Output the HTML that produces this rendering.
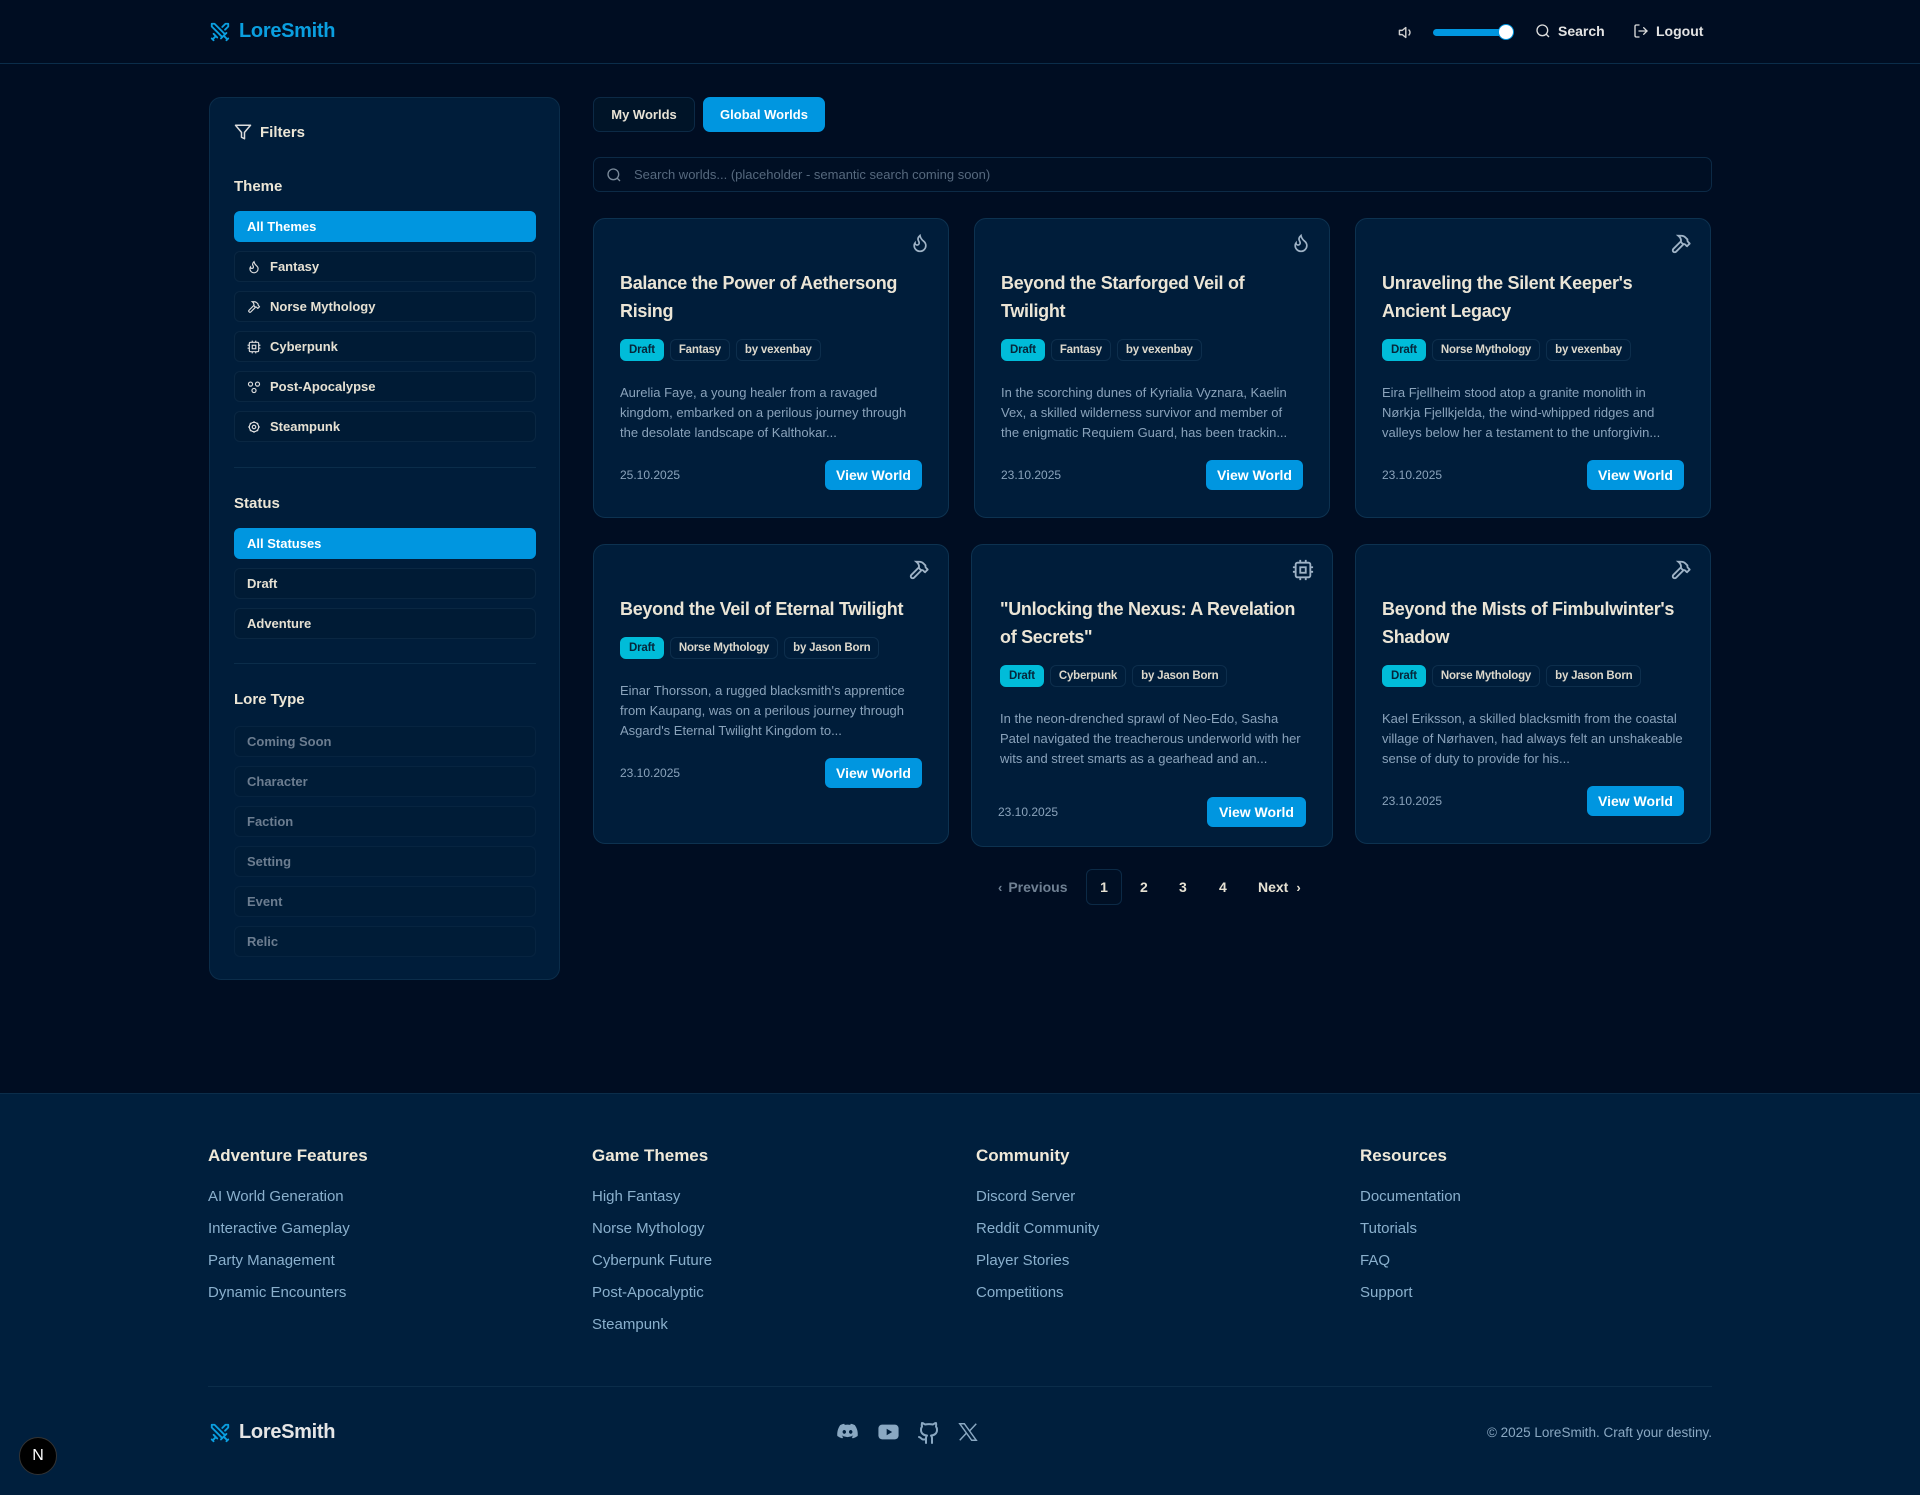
<!DOCTYPE html>
<html><head><meta charset="utf-8"><style>
*{box-sizing:border-box;margin:0;padding:0}
body{width:1920px;height:1495px;background:#000d22;font-family:"Liberation Sans",sans-serif;color:#e8e3d6;position:relative;overflow:hidden}
.abs{position:absolute}
svg{display:block}
.hdr{left:0;top:0;width:1920px;height:64px;border-bottom:1px solid #0b2d4a}
.logo{display:flex;align-items:center;gap:8px;color:#0a9fe0;font-weight:700;font-size:20px;letter-spacing:-0.3px}
.nav{display:flex;align-items:center;gap:7px;font-size:14px;font-weight:700;color:#e3e3e3}
.side{left:209px;top:97px;width:351px;height:883px;background:#001d3a;border:1px solid #0b2d4a;border-radius:12px}
.sh{position:absolute;left:24px;font-size:15px;font-weight:700;color:#ece6d6}
.item{position:absolute;left:24px;width:302px;height:31px;border:1px solid #0a2742;border-radius:6px;background:#001b35;font-size:13px;font-weight:700;display:flex;align-items:center;padding-left:12px;gap:9px;color:#e6e1d3}
.item.on{background:#0096e0;border-color:#0096e0;color:#fff}
.item.dim{color:#6c7d90;background:#001c37;border-color:#072440}
.div{position:absolute;left:24px;width:302px;height:1px;background:#0b2d4a}
.tab{top:97px;height:35px;border-radius:7px;font-size:13px;font-weight:700;display:flex;align-items:center;justify-content:center}
.card{width:356px;background:#001d3a;border:1px solid #0d3250;border-radius:12px;padding:50px 26px 26px}
.card .ic{position:absolute;top:14px;right:18px}
.card h3{font-size:18px;line-height:28px;font-weight:700;color:#ebe5d6;letter-spacing:-0.3px}
.tags{display:flex;gap:6px;margin-top:14px;height:24px}
.tag{height:22px;border:1px solid #0d2e4c;border-radius:6px;font-size:11.5px;font-weight:700;padding:0 8px;display:flex;align-items:center;color:#dcd8cc;letter-spacing:-0.2px}
.tag.d{background:#00bcd9;border-color:#00bcd9;color:#05263a}
.desc{margin-top:20px;font-size:13px;line-height:20px;color:#8aa3bb}
.foot{margin-top:17px;display:flex;justify-content:space-between;align-items:center;height:30px}
.date{font-size:12px;color:#8aa3bb}
.btn{background:#0096e0;color:#fff;font-weight:700;font-size:14px;height:30px;width:97px;border-radius:6px;display:flex;align-items:center;justify-content:center}
.pg{top:869px;height:36px;font-size:14px;font-weight:700;display:flex;align-items:center;color:#e6e1d3}
.fbg{left:0;top:1093px;width:1920px;height:402px;background:#001f3d;border-top:1px solid #0b2d4a}
.fc{top:1146px}
.fc h4{font-size:17px;font-weight:700;color:#efe9d9;height:22px;margin-bottom:13px}
.fc a{display:block;font-size:15px;color:#8ab0cd;line-height:32px;text-decoration:none}
</style></head><body>

<div class="abs hdr"></div>
<div class="abs logo" style="left:209px;top:20px">
<svg width="22" height="22" viewBox="0 0 24 24" fill="none" stroke="#0a9fe0" stroke-width="2" stroke-linecap="round" stroke-linejoin="round"><polyline points="14.5 17.5 3 6 3 3 6 3 17.5 14.5"/><line x1="13" y1="19" x2="19" y2="13"/><line x1="16" y1="16" x2="20" y2="20"/><line x1="19" y1="21" x2="21" y2="19"/><polyline points="14.5 6.5 18 3 21 3 21 6 17.5 9.5"/><line x1="5" y1="14" x2="9" y2="18"/><line x1="7" y1="17" x2="4" y2="20"/><line x1="3" y1="19" x2="5" y2="21"/></svg>LoreSmith</div>

<svg class="abs" style="left:1398px;top:24px" width="17" height="17" viewBox="0 0 24 24" fill="none" stroke="#cfcfcf" stroke-width="2" stroke-linecap="round" stroke-linejoin="round"><path d="M11 5 6 9H2v6h4l5 4z"/><path d="M15.5 8.5a5 5 0 0 1 0 7"/></svg>
<div class="abs" style="left:1433px;top:29px;width:78px;height:7px;border-radius:4px;background:#0096e0"></div>
<div class="abs" style="left:1498px;top:24px;width:16px;height:16px;border-radius:50%;background:#fff;border:1px solid #0096e0"></div>
<div class="abs nav" style="left:1535px;top:23px"><svg width="16" height="16" viewBox="0 0 24 24" fill="none" stroke="#ddd" stroke-width="2"><circle cx="11" cy="11" r="8"/><path d="m21 21-4.3-4.3"/></svg>Search</div>
<div class="abs nav" style="left:1633px;top:23px"><svg width="16" height="16" viewBox="0 0 24 24" fill="none" stroke="#ddd" stroke-width="2" stroke-linecap="round"><path d="M9 21H5a2 2 0 0 1-2-2V5a2 2 0 0 1 2-2h4"/><polyline points="16 17 21 12 16 7"/><line x1="21" y1="12" x2="9" y2="12"/></svg>Logout</div>

<!-- sidebar -->
<div class="abs side">
<div class="sh" style="top:25px;display:flex;gap:8px;align-items:center"><svg width="18" height="18" viewBox="0 0 24 24" fill="none" stroke="#ddd" stroke-width="2" stroke-linejoin="round"><polygon points="22 3 2 3 10 12.5 10 19 14 21 14 12.5 22 3"/></svg>Filters</div>
<div class="sh" style="top:80px">Theme</div>
<div class="item on" style="top:113px">All Themes</div>
<div class="item" style="top:153px"><svg width="14" height="14" viewBox="0 0 24 24" fill="none" stroke="#ddd" stroke-width="2"><path d="M8.5 14.5A2.5 2.5 0 0 0 11 12c0-1.38-.5-2-1-3-1.072-2.143-.224-4.054 2-6 .5 2.5 2 4.9 4 6.5 2 1.6 3 3.5 3 5.5a7 7 0 1 1-14 0c0-1.153.433-2.294 1-3a2.5 2.5 0 0 0 2.5 2.5z"/></svg>Fantasy</div>
<div class="item" style="top:193px"><svg width="14" height="14" viewBox="0 0 24 24" fill="none" stroke="#ddd" stroke-width="2"><path d="m15 12-8.373 8.373a1 1 0 1 1-3-3L12 9"/><path d="m18 15 4-4"/><path d="m21.5 11.5-1.914-1.914A2 2 0 0 1 19 8.172V7l-2.26-2.26a6 6 0 0 0-4.202-1.756L9 2.96l.92.82A6.18 6.18 0 0 1 12 8.4V10l2 2h1.172a2 2 0 0 1 1.414.586L18.5 14.5"/></svg>Norse Mythology</div>
<div class="item" style="top:233px"><svg width="14" height="14" viewBox="0 0 24 24" fill="none" stroke="#ddd" stroke-width="2"><rect x="4" y="4" width="16" height="16" rx="2"/><rect x="9" y="9" width="6" height="6"/><path d="M9 1v3M15 1v3M9 20v3M15 20v3M20 9h3M20 14h3M1 9h3M1 14h3"/></svg>Cyberpunk</div>
<div class="item" style="top:273px"><svg width="14" height="14" viewBox="0 0 24 24" fill="none" stroke="#ddd" stroke-width="2"><circle cx="6" cy="7" r="3.5"/><circle cx="18" cy="7" r="3.5"/><circle cx="12" cy="18" r="3.5"/></svg>Post-Apocalypse</div>
<div class="item" style="top:313px"><svg width="14" height="14" viewBox="0 0 24 24" fill="none" stroke="#ddd" stroke-width="2"><circle cx="12" cy="12" r="8"/><circle cx="12" cy="12" r="3"/><path d="M12 2v2M12 20v2M2 12h2M20 12h2M5 5l1.5 1.5M17.5 17.5 19 19M5 19l1.5-1.5M17.5 6.5 19 5"/></svg>Steampunk</div>
<div class="div" style="top:369px"></div>
<div class="sh" style="top:397px">Status</div>
<div class="item on" style="top:430px">All Statuses</div>
<div class="item" style="top:470px">Draft</div>
<div class="item" style="top:510px">Adventure</div>
<div class="div" style="top:565px"></div>
<div class="sh" style="top:593px">Lore Type</div>
<div class="item dim" style="top:628px">Coming Soon</div>
<div class="item dim" style="top:668px">Character</div>
<div class="item dim" style="top:708px">Faction</div>
<div class="item dim" style="top:748px">Setting</div>
<div class="item dim" style="top:788px">Event</div>
<div class="item dim" style="top:828px">Relic</div>
</div>

<div class="abs tab" style="left:593px;width:102px;background:#001428;border:1px solid #0c2a46">My Worlds</div>
<div class="abs tab" style="left:703px;width:122px;background:#0096e0;color:#fff">Global Worlds</div>
<div class="abs" style="left:593px;top:157px;width:1119px;height:35px;border:1px solid #0c2a46;border-radius:7px;background:#000f24;display:flex;align-items:center;padding-left:12px;gap:12px;font-size:13px;color:#56697e">
<svg width="16" height="16" viewBox="0 0 24 24" fill="none" stroke="#7a8a9a" stroke-width="2"><circle cx="11" cy="11" r="8"/><path d="m21 21-4.3-4.3"/></svg>Search worlds... (placeholder - semantic search coming soon)</div>

<div class="abs card" style="left:593px;top:218px;height:300px">
<svg class="ic" width="20" height="20" viewBox="0 0 24 24" fill="none" stroke="#9fb3c6" stroke-width="2"><path d="M8.5 14.5A2.5 2.5 0 0 0 11 12c0-1.38-.5-2-1-3-1.072-2.143-.224-4.054 2-6 .5 2.5 2 4.9 4 6.5 2 1.6 3 3.5 3 5.5a7 7 0 1 1-14 0c0-1.153.433-2.294 1-3a2.5 2.5 0 0 0 2.5 2.5z"/></svg>
<h3>Balance the Power of Aethersong Rising</h3>
<div class="tags"><span class="tag d">Draft</span><span class="tag">Fantasy</span><span class="tag">by vexenbay</span></div>
<div class="desc">Aurelia Faye, a young healer from a ravaged kingdom, embarked on a perilous journey through the desolate landscape of Kalthokar...</div>
<div class="foot"><span class="date">25.10.2025</span><span class="btn">View World</span></div></div>

<div class="abs card" style="left:974px;top:218px;height:300px">
<svg class="ic" width="20" height="20" viewBox="0 0 24 24" fill="none" stroke="#9fb3c6" stroke-width="2"><path d="M8.5 14.5A2.5 2.5 0 0 0 11 12c0-1.38-.5-2-1-3-1.072-2.143-.224-4.054 2-6 .5 2.5 2 4.9 4 6.5 2 1.6 3 3.5 3 5.5a7 7 0 1 1-14 0c0-1.153.433-2.294 1-3a2.5 2.5 0 0 0 2.5 2.5z"/></svg>
<h3>Beyond the Starforged Veil of Twilight</h3>
<div class="tags"><span class="tag d">Draft</span><span class="tag">Fantasy</span><span class="tag">by vexenbay</span></div>
<div class="desc">In the scorching dunes of Kyrialia Vyznara, Kaelin Vex, a skilled wilderness survivor and member of the enigmatic Requiem Guard, has been trackin...</div>
<div class="foot"><span class="date">23.10.2025</span><span class="btn">View World</span></div></div>

<div class="abs card" style="left:1355px;top:218px;height:300px">
<svg class="ic" width="22" height="22" viewBox="0 0 24 24" fill="none" stroke="#9fb3c6" stroke-width="2"><path d="m15 12-8.373 8.373a1 1 0 1 1-3-3L12 9"/><path d="m18 15 4-4"/><path d="m21.5 11.5-1.914-1.914A2 2 0 0 1 19 8.172V7l-2.26-2.26a6 6 0 0 0-4.202-1.756L9 2.96l.92.82A6.18 6.18 0 0 1 12 8.4V10l2 2h1.172a2 2 0 0 1 1.414.586L18.5 14.5"/></svg>
<h3>Unraveling the Silent Keeper's Ancient Legacy</h3>
<div class="tags"><span class="tag d">Draft</span><span class="tag">Norse Mythology</span><span class="tag">by vexenbay</span></div>
<div class="desc">Eira Fjellheim stood atop a granite monolith in Nørkja Fjellkjelda, the wind-whipped ridges and valleys below her a testament to the unforgivin...</div>
<div class="foot"><span class="date">23.10.2025</span><span class="btn">View World</span></div></div>

<div class="abs card" style="left:593px;top:544px;height:300px">
<svg class="ic" width="22" height="22" viewBox="0 0 24 24" fill="none" stroke="#9fb3c6" stroke-width="2"><path d="m15 12-8.373 8.373a1 1 0 1 1-3-3L12 9"/><path d="m18 15 4-4"/><path d="m21.5 11.5-1.914-1.914A2 2 0 0 1 19 8.172V7l-2.26-2.26a6 6 0 0 0-4.202-1.756L9 2.96l.92.82A6.18 6.18 0 0 1 12 8.4V10l2 2h1.172a2 2 0 0 1 1.414.586L18.5 14.5"/></svg>
<h3>Beyond the Veil of Eternal Twilight</h3>
<div class="tags"><span class="tag d">Draft</span><span class="tag">Norse Mythology</span><span class="tag">by Jason Born</span></div>
<div class="desc">Einar Thorsson, a rugged blacksmith's apprentice from Kaupang, was on a perilous journey through Asgard's Eternal Twilight Kingdom to...</div>
<div class="foot"><span class="date">23.10.2025</span><span class="btn">View World</span></div></div>

<div class="abs card" style="left:971px;top:544px;height:303px;width:362px">
<svg class="ic" width="22" height="22" viewBox="0 0 24 24" fill="none" stroke="#9fb3c6" stroke-width="2"><rect x="4" y="4" width="16" height="16" rx="2"/><rect x="9" y="9" width="6" height="6"/><path d="M9 1v3M15 1v3M9 20v3M15 20v3M20 9h3M20 14h3M1 9h3M1 14h3"/></svg>
<h3 style="padding-left:2px">"Unlocking the Nexus: A Revelation of Secrets"</h3>
<div class="tags" style="padding-left:2px"><span class="tag d">Draft</span><span class="tag">Cyberpunk</span><span class="tag">by Jason Born</span></div>
<div class="desc" style="padding-left:2px">In the neon-drenched sprawl of Neo-Edo, Sasha Patel navigated the treacherous underworld with her wits and street smarts as a gearhead and an...</div>
<div class="foot" style="margin-top:28px"><span class="date">23.10.2025</span><span class="btn" style="width:99px">View World</span></div></div>

<div class="abs card" style="left:1355px;top:544px;height:300px">
<svg class="ic" width="22" height="22" viewBox="0 0 24 24" fill="none" stroke="#9fb3c6" stroke-width="2"><path d="m15 12-8.373 8.373a1 1 0 1 1-3-3L12 9"/><path d="m18 15 4-4"/><path d="m21.5 11.5-1.914-1.914A2 2 0 0 1 19 8.172V7l-2.26-2.26a6 6 0 0 0-4.202-1.756L9 2.96l.92.82A6.18 6.18 0 0 1 12 8.4V10l2 2h1.172a2 2 0 0 1 1.414.586L18.5 14.5"/></svg>
<h3>Beyond the Mists of Fimbulwinter's Shadow</h3>
<div class="tags"><span class="tag d">Draft</span><span class="tag">Norse Mythology</span><span class="tag">by Jason Born</span></div>
<div class="desc">Kael Eriksson, a skilled blacksmith from the coastal village of Nørhaven, had always felt an unshakeable sense of duty to provide for his...</div>
<div class="foot"><span class="date">23.10.2025</span><span class="btn">View World</span></div></div>

<!-- pagination -->
<div class="abs pg" style="left:998px;color:#6f8093;gap:6px"><span style="font-size:13px">‹</span>Previous</div>
<div class="abs pg" style="left:1086px;width:36px;justify-content:center;border:1px solid #0c2a46;border-radius:6px;background:#000f24">1</div>
<div class="abs pg" style="left:1140px">2</div>
<div class="abs pg" style="left:1179px">3</div>
<div class="abs pg" style="left:1219px">4</div>
<div class="abs pg" style="left:1258px;gap:8px">Next<span style="font-size:13px">›</span></div>

<!-- footer -->
<div class="abs fbg"></div>
<div class="abs fc" style="left:208px"><h4>Adventure Features</h4><a>AI World Generation</a><a>Interactive Gameplay</a><a>Party Management</a><a>Dynamic Encounters</a></div>
<div class="abs fc" style="left:592px"><h4>Game Themes</h4><a>High Fantasy</a><a>Norse Mythology</a><a>Cyberpunk Future</a><a>Post-Apocalyptic</a><a>Steampunk</a></div>
<div class="abs fc" style="left:976px"><h4>Community</h4><a>Discord Server</a><a>Reddit Community</a><a>Player Stories</a><a>Competitions</a></div>
<div class="abs fc" style="left:1360px"><h4>Resources</h4><a>Documentation</a><a>Tutorials</a><a>FAQ</a><a>Support</a></div>
<div class="abs" style="left:208px;top:1386px;width:1504px;height:1px;background:#0b2d4a"></div>
<div class="abs logo" style="left:209px;top:1421px;color:#e6e6e6;font-size:20px">
<svg width="22" height="22" viewBox="0 0 24 24" fill="none" stroke="#0a9fe0" stroke-width="2" stroke-linecap="round" stroke-linejoin="round"><polyline points="14.5 17.5 3 6 3 3 6 3 17.5 14.5"/><line x1="13" y1="19" x2="19" y2="13"/><line x1="16" y1="16" x2="20" y2="20"/><line x1="19" y1="21" x2="21" y2="19"/><polyline points="14.5 6.5 18 3 21 3 21 6 17.5 9.5"/><line x1="5" y1="14" x2="9" y2="18"/><line x1="7" y1="17" x2="4" y2="20"/><line x1="3" y1="19" x2="5" y2="21"/></svg>LoreSmith</div>
<div class="abs" style="left:835px;top:1421px;display:flex;gap:16px">
<svg width="25" height="22" viewBox="0 0 24 24"><path fill="#8aa8c2" d="M20 4.5A18 18 0 0 0 15.6 3l-.6 1.2a16 16 0 0 0-6 0L8.4 3A18 18 0 0 0 4 4.5C1.3 8.6.5 12.5.9 16.4A18 18 0 0 0 6.3 19l1.2-1.8a11 11 0 0 1-1.8-.9l.4-.3a12.8 12.8 0 0 0 11.8 0l.4.3a11 11 0 0 1-1.8.9l1.2 1.8a18 18 0 0 0 5.4-2.6c.5-4.6-.7-8.5-3.1-11.9zM8.5 14c-1 0-1.9-1-1.9-2.1S7.4 9.8 8.5 9.8s1.9 1 1.9 2.1-.8 2.1-1.9 2.1zm7 0c-1 0-1.9-1-1.9-2.1s.8-2.1 1.9-2.1 1.9 1 1.9 2.1-.8 2.1-1.9 2.1z"/></svg>
<svg width="25" height="22" viewBox="0 0 24 24"><rect x="1" y="4" width="22" height="16" rx="4" fill="#8aa8c2"/><path d="M10 8.5v7l6-3.5z" fill="#001f3d"/></svg>
<svg width="24" height="24" viewBox="0 0 24 24" fill="none" stroke="#8aa8c2" stroke-width="2" stroke-linecap="round" stroke-linejoin="round"><path d="M15 22v-4a4.8 4.8 0 0 0-1-3.5c3 0 6-2 6-5.5.08-1.25-.27-2.48-1-3.5.28-1.15.28-2.35 0-3.5 0 0-1 0-3 1.5-2.64-.5-5.36-.5-8 0C6 2 5 2 5 2c-.3 1.15-.3 2.35 0 3.5A5.4 5.4 0 0 0 4 9c0 3.5 3 5.5 6 5.5-.39.49-.68 1.05-.85 1.65-.17.6-.22 1.23-.15 1.85v4"/><path d="M9 18c-4.51 2-5-2-7-2"/></svg>
<svg width="22" height="22" viewBox="0 0 24 24"><path fill="none" stroke="#8aa8c2" stroke-width="1.6" d="M3 3h5l13 18h-5zM3 21l7.5-8M21 3l-7.5 8"/></svg>
</div>
<div class="abs" style="right:208px;top:1425px;font-size:13.5px;color:#8aa8c2">© 2025 LoreSmith. Craft your destiny.</div>
<div class="abs" style="left:19px;top:1437px;width:38px;height:38px;border-radius:50%;background:#000;border:1px solid #333;color:#fff;font-size:16px;display:flex;align-items:center;justify-content:center">N</div>
</body></html>
